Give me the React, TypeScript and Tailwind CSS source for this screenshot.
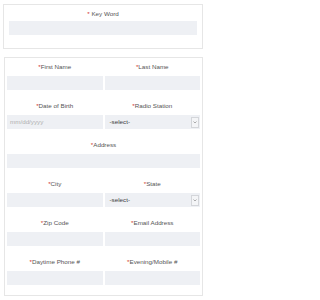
import React from "react";

type Field = {
  label: string;
  kind?: "text" | "date" | "select";
};

const rows: Field[][] = [
  [{ label: "First Name" }, { label: "Last Name" }],
  [{ label: "Date of Birth", kind: "date" }, { label: "Radio Station", kind: "select" }],
  [{ label: "Address" }],
  [{ label: "City" }, { label: "State", kind: "select" }],
  [{ label: "Zip Code" }, { label: "Email Address" }],
  [{ label: "Daytime Phone #" }, { label: "Evening/Mobile #" }],
];

function Label({ text, spaced }: { text: string; spaced?: boolean }) {
  return (
    <div className="text-center text-[6.25px] leading-[8px] text-[#555]">
      <span className="text-[#d0342c]">*</span>
      {spaced ? " " : ""}
      {text}
    </div>
  );
}

function Input({ kind = "text" }: { kind?: Field["kind"] }) {
  if (kind === "select") {
    return (
      <div className="flex h-[14px] items-center justify-between bg-[#eef0f4] pl-[5px] pr-[1px]">
        <span className="text-[6.25px] leading-[8px] text-[#3a3a3a]">-select-</span>
        <div className="flex h-[11px] w-[8px] items-center justify-center border border-[#d4d6da] bg-[#f4f5f7]">
          <svg width="4" height="3" viewBox="0 0 4 3">
            <path d="M0.5 0.5 L2 2 L3.5 0.5" fill="none" stroke="#777" strokeWidth="0.6" />
          </svg>
        </div>
      </div>
    );
  }
  return (
    <div className="flex h-[14px] items-center bg-[#eef0f4] pl-[3px]">
      {kind === "date" && (
        <span className="text-[6.25px] leading-[8px] text-[#b0b0b0]">mm/dd/yyyy</span>
      )}
    </div>
  );
}

export default function App() {
  return (
    <div
      className="flex h-[300px] w-[206px] flex-col bg-white pl-[3px] pr-[3px] pt-[4px]"
      style={{ fontFamily: '"Liberation Sans", Arial, sans-serif' }}
    >
      {/* Key word card */}
      <div className="flex h-[45px] flex-col border border-[#e6e6e6] px-[5px] pt-[5px]">
        <Label text="Key Word" spaced />
        <div className="mt-[3px]">
          <Input />
        </div>
      </div>

      {/* Details card */}
      <div className="mt-[8px] ml-[1px] flex flex-col border border-[#e6e6e6] px-[2px] pt-[5px] pb-[10px]">
        {rows.map((row, i) => (
          <div key={i} className={`flex gap-[2px] ${i > 0 ? "mt-[12px]" : ""}`}>
            {row.map((f) => (
              <div key={f.label} className="flex flex-1 flex-col gap-[5px]">
                <Label text={f.label} />
                <Input kind={f.kind} />
              </div>
            ))}
          </div>
        ))}
      </div>
    </div>
  );
}
